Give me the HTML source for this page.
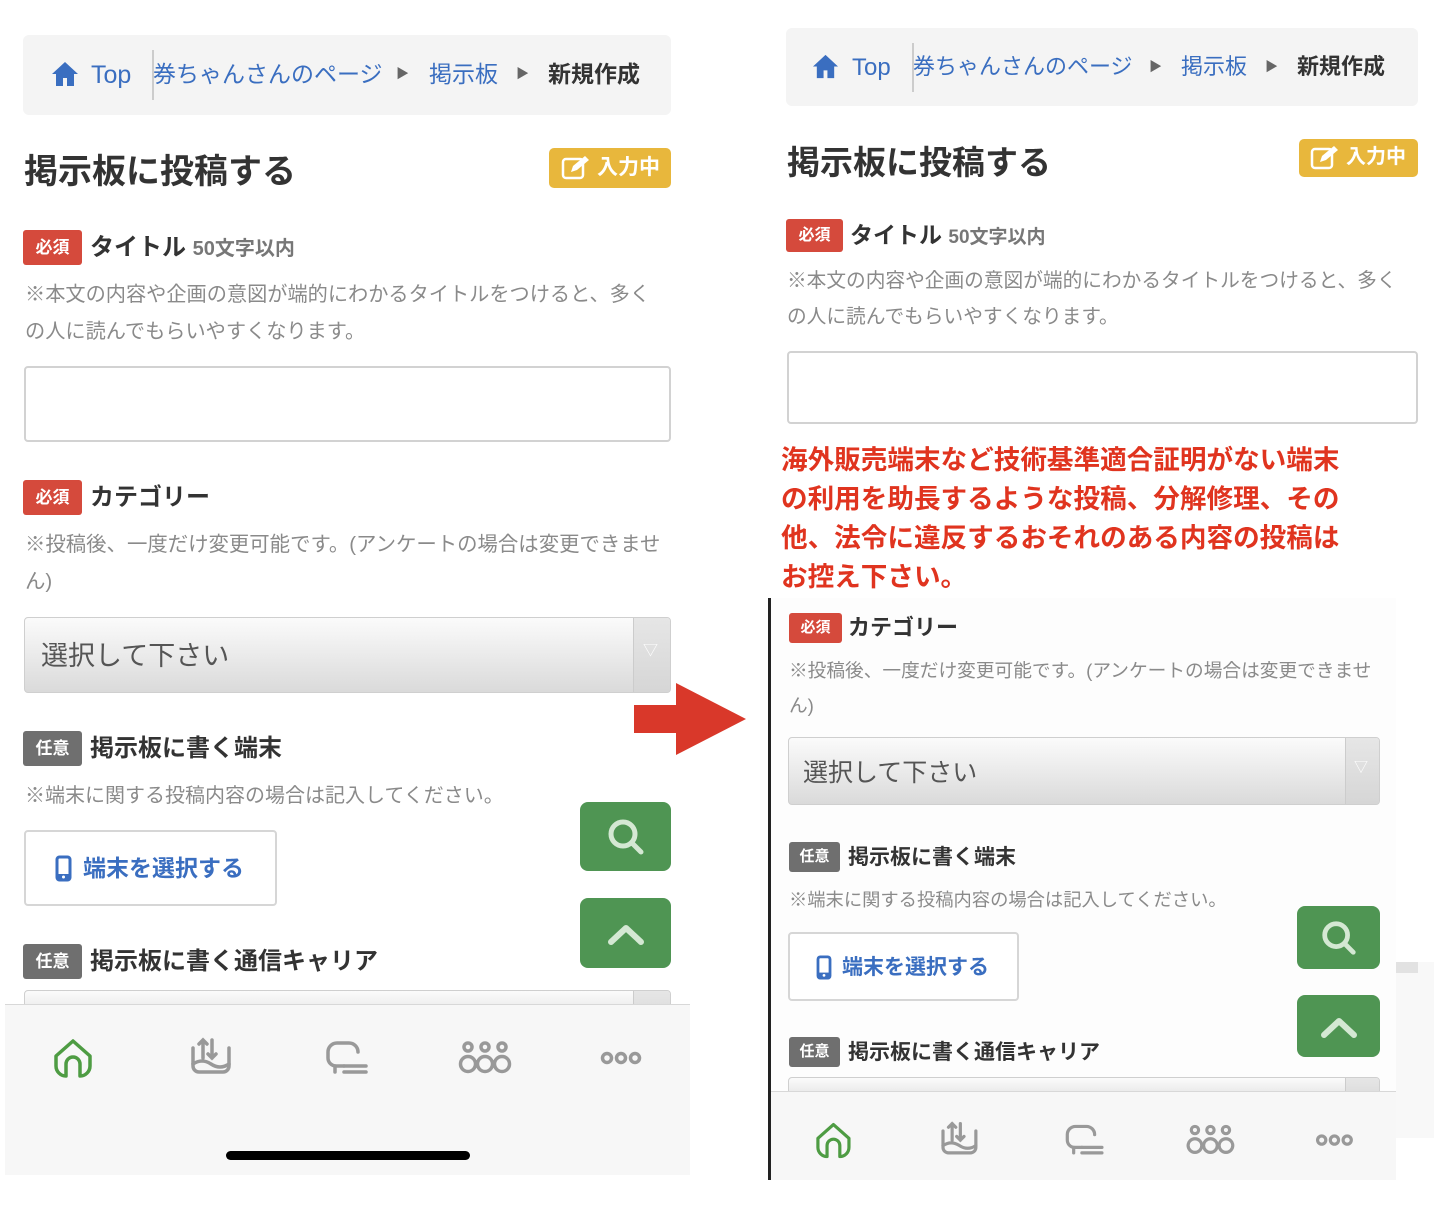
<!DOCTYPE html>
<html><head><meta charset="utf-8"><style>
*{margin:0;padding:0;box-sizing:border-box}
body{width:1434px;height:1206px;background:#fff;position:relative;overflow:hidden;font-family:"Liberation Sans","Noto Sans CJK JP",sans-serif;color:#333}
.a{position:absolute;white-space:nowrap;line-height:1}
.bc{background:#f4f4f4;border-radius:6px}
.blue{color:#3a6ec0}
.badge{position:absolute;color:#fff;border-radius:3px;text-align:center;font-weight:bold}
.req{background:#d54a3c}
.opt{background:#6f6f6f}
.h{font-weight:bold;color:#333}
.note{color:#8a8a8a}
.inp{position:absolute;border:2px solid #d2d2d2;border-radius:4px;background:#fff}
.sel{position:absolute;border:1px solid #cfcfcf;border-radius:4px;background:linear-gradient(#fbfbfb,#dadada);overflow:hidden}
.sel .r{position:absolute;right:0;top:0;bottom:0;background:linear-gradient(#e6e6e6,#d6d6d6);border-left:1px solid #ccc}
.gb{position:absolute;background:#4f9553;border-radius:8px}
.btn{position:absolute;border:2px solid #d6d6d6;border-radius:4px;background:#fff}
.nav{position:absolute;background:#f7f7f7;border-top:1px solid #d8d8d8}
</style></head><body>

<!-- LEFT -->
<div class="a bc" style="left:23px;top:35px;width:648px;height:80px"></div>
<svg class="a" style="left:51px;top:60px" width="28" height="28" viewBox="0 0 28 28"><path d="M14 2L1 14h4v12h7v-8h4v8h7V14h4z" fill="#3a6ec0"/></svg>
<div class="a blue" style="left:91px;top:63px;font-size:25px">Top</div>
<div class="a" style="left:152px;top:50px;width:2px;height:50px;background:#ccc"></div>
<div class="a blue" style="left:153px;top:63px;font-size:23px">券ちゃんさんのページ</div>
<div class="a" style="left:396px;top:67px;font-size:13px;color:#666">▶</div>
<div class="a blue" style="left:429px;top:63px;font-size:23px">掲示板</div>
<div class="a" style="left:516px;top:67px;font-size:13px;color:#666">▶</div>
<div class="a h" style="left:548px;top:63px;font-size:23px">新規作成</div>

<div class="a h" style="left:24px;top:155px;font-size:34px">掲示板に投稿する</div>
<div class="a" style="left:549px;top:148px;width:122px;height:40px;background:#e8b73c;border-radius:5px"></div>
<svg class="a" style="left:561px;top:155px" width="30" height="26" viewBox="0 0 30 26"><rect x="2" y="4" width="20" height="19" rx="3" fill="none" stroke="#fff" stroke-width="2.5"/><path d="M10 17l2-6 12-10 4 4-12 10z" fill="#fff"/></svg>
<div class="a" style="left:597px;top:157px;font-size:21px;color:#fff;font-weight:bold">入力中</div>

<div class="badge req" style="left:23px;top:230px;width:59px;height:35px;line-height:35px;font-size:17px">必須</div>
<div class="a h" style="left:90px;top:236px;font-size:24px">タイトル <span style="color:#777;font-size:20px">50文字以内</span></div>
<div class="a note" style="left:25px;top:285px;font-size:20.2px">※本文の内容や企画の意図が端的にわかるタイトルをつけると、多く</div>
<div class="a note" style="left:25px;top:322px;font-size:20.2px">の人に読んでもらいやすくなります。</div>
<div class="inp" style="left:24px;top:366px;width:647px;height:76px"></div>

<div class="badge req" style="left:23px;top:480px;width:59px;height:35px;line-height:35px;font-size:17px">必須</div>
<div class="a h" style="left:90px;top:486px;font-size:24px">カテゴリー</div>
<div class="a note" style="left:25px;top:535px;font-size:20.4px">※投稿後、一度だけ変更可能です。(アンケートの場合は変更できませ</div>
<div class="a note" style="left:25px;top:572px;font-size:20.4px">ん)</div>
<div class="sel" style="left:24px;top:617px;width:647px;height:76px"><div class="r" style="width:37px"></div><div class="a" style="left:16px;top:25px;font-size:27px;color:#555">選択して下さい</div><div class="a" style="right:12px;top:25px;font-size:15px;color:#fff">▽</div></div>

<div class="badge opt" style="left:23px;top:731px;width:59px;height:35px;line-height:35px;font-size:17px">任意</div>
<div class="a h" style="left:90px;top:737px;font-size:24px">掲示板に書く端末</div>
<div class="a note" style="left:25px;top:786px;font-size:20px">※端末に関する投稿内容の場合は記入してください。</div>
<div class="btn" style="left:24px;top:830px;width:253px;height:76px"></div>
<svg class="a" style="left:55px;top:855px" width="17" height="27" viewBox="0 0 17 27"><rect x="2" y="2" width="13" height="23" rx="2.5" fill="none" stroke="#3a6ec0" stroke-width="3"/><rect x="2" y="19" width="13" height="6" fill="#3a6ec0"/><circle cx="8.5" cy="22" r="1.5" fill="#fff"/></svg>
<div class="a blue" style="left:83px;top:857px;font-size:23px;font-weight:bold">端末を選択する</div>

<div class="gb" style="left:580px;top:802px;width:91px;height:69px"></div>
<svg class="a" style="left:605px;top:816px" width="42" height="42" viewBox="0 0 42 42"><circle cx="18" cy="18" r="12" fill="none" stroke="#d4e8d3" stroke-width="5"/><path d="M27 27l9 9" stroke="#d4e8d3" stroke-width="5" stroke-linecap="round"/></svg>
<div class="gb" style="left:580px;top:898px;width:91px;height:70px"></div>
<svg class="a" style="left:605px;top:920px" width="42" height="28" viewBox="0 0 42 28"><path d="M6 22L21 8l15 14" fill="none" stroke="#d4e8d3" stroke-width="6" stroke-linecap="round" stroke-linejoin="round"/></svg>

<div class="badge opt" style="left:23px;top:944px;width:59px;height:35px;line-height:35px;font-size:17px">任意</div>
<div class="a h" style="left:90px;top:950px;font-size:24px">掲示板に書く通信キャリア</div>
<div class="sel" style="left:24px;top:990px;width:647px;height:40px"><div class="r" style="width:37px"></div></div>

<div class="nav" style="left:5px;top:1004px;width:685px;height:171px"></div>
<svg class="a" style="left:50px;top:1036px" width="240" height="46" viewBox="0 0 240 46">
<path d="M6 20L23 5l17 15v10a10 10 0 0 1-10 10h0V28a7 7 0 0 0-14 0v12h0A10 10 0 0 1 6 30z" fill="none" stroke="#4e9c43" stroke-width="3.5" stroke-linejoin="round"/>
<g fill="none" stroke="#999" stroke-width="3.5" stroke-linecap="round"><path d="M143 12v18a6 6 0 0 0 6 6h24a6 6 0 0 0 6-6V12"/><path d="M143 28q9-6 18 0t18 0"/><path d="M153 22V4M149 8l4-4 4 4M162 4v18M158 18l4 4 4-4"/></g>
</svg>
<svg class="a" style="left:320px;top:1036px" width="340" height="46" viewBox="0 0 340 46" fill="none" stroke="#999" stroke-width="3.5" stroke-linecap="round">
<path d="M24 30h-8a8 8 0 0 1-8-8v-6a9 9 0 0 1 9-9h12a9 9 0 0 1 9 9"/><path d="M15 30v6M24 30h22M24 36h22"/>
<circle cx="148" cy="11" r="4"/><circle cx="165" cy="11" r="4"/><circle cx="182" cy="11" r="4"/><circle cx="148" cy="28" r="7.5"/><circle cx="165" cy="28" r="7.5"/><circle cx="182" cy="28" r="7.5"/>
<circle cx="287" cy="22" r="4.5"/><circle cx="301" cy="22" r="4.5"/><circle cx="315" cy="22" r="4.5"/>
</svg>
<div class="a" style="left:226px;top:1151px;width:244px;height:9px;background:#000;border-radius:5px"></div>

<!-- ARROW -->
<div class="a" style="left:634px;top:705px;width:44px;height:28px;background:#d9382a"></div>
<div class="a" style="left:676px;top:683px;width:0;height:0;border-top:36px solid transparent;border-bottom:36px solid transparent;border-left:70px solid #d9382a"></div>

<!-- RIGHT -->
<div class="a bc" style="left:786px;top:28px;width:632px;height:78px"></div>
<svg class="a" style="left:812px;top:53px" width="27" height="27" viewBox="0 0 28 28"><path d="M14 2L1 14h4v12h7v-8h4v8h7V14h4z" fill="#3a6ec0"/></svg>
<div class="a blue" style="left:852px;top:56px;font-size:24px">Top</div>
<div class="a" style="left:912px;top:43px;width:2px;height:49px;background:#ccc"></div>
<div class="a blue" style="left:913px;top:56px;font-size:22px">券ちゃんさんのページ</div>
<div class="a" style="left:1149px;top:60px;font-size:13px;color:#666">▶</div>
<div class="a blue" style="left:1181px;top:56px;font-size:22px">掲示板</div>
<div class="a" style="left:1265px;top:60px;font-size:13px;color:#666">▶</div>
<div class="a h" style="left:1297px;top:56px;font-size:22px">新規作成</div>

<div class="a h" style="left:787px;top:146px;font-size:33px">掲示板に投稿する</div>
<div class="a" style="left:1299px;top:139px;width:119px;height:38px;background:#e8b73c;border-radius:5px"></div>
<svg class="a" style="left:1310px;top:145px" width="30" height="26" viewBox="0 0 30 26"><rect x="2" y="4" width="20" height="19" rx="3" fill="none" stroke="#fff" stroke-width="2.5"/><path d="M10 17l2-6 12-10 4 4-12 10z" fill="#fff"/></svg>
<div class="a" style="left:1346px;top:147px;font-size:20px;color:#fff;font-weight:bold">入力中</div>

<div class="badge req" style="left:786px;top:219px;width:57px;height:33px;line-height:33px;font-size:16px">必須</div>
<div class="a h" style="left:850px;top:224px;font-size:23px">タイトル <span style="color:#777;font-size:19px">50文字以内</span></div>
<div class="a note" style="left:787px;top:272px;font-size:19.7px">※本文の内容や企画の意図が端的にわかるタイトルをつけると、多く</div>
<div class="a note" style="left:787px;top:308px;font-size:19.7px">の人に読んでもらいやすくなります。</div>
<div class="inp" style="left:787px;top:351px;width:631px;height:73px"></div>

<div style="position:absolute;left:781px;top:441px;font-size:26.6px;line-height:39px;color:#e0341f;font-weight:bold;width:570px">海外販売端末など技術基準適合証明がない端末の利用を助長するような投稿、分解修理、その他、法令に違反するおそれのある内容の投稿はお控え下さい。</div>

<div class="a" style="left:1396px;top:962px;width:38px;height:176px;background:#f8f8f8"></div>
<div class="a" style="left:1396px;top:962px;width:22px;height:11px;background:#e2e2e2"></div>
<div class="a" style="left:770px;top:598px;width:626px;height:582px;background:#fdfdfd"></div>
<div class="a" style="left:768px;top:598px;width:3px;height:582px;background:#222"></div>

<div class="badge req" style="left:789px;top:613px;width:53px;height:30px;line-height:30px;font-size:15px">必須</div>
<div class="a h" style="left:848px;top:617px;font-size:22px">カテゴリー</div>
<div class="a note" style="left:789px;top:662px;font-size:18.7px">※投稿後、一度だけ変更可能です。(アンケートの場合は変更できませ</div>
<div class="a note" style="left:789px;top:697px;font-size:18.7px">ん)</div>
<div class="sel" style="left:788px;top:737px;width:592px;height:68px"><div class="r" style="width:34px"></div><div class="a" style="left:14px;top:23px;font-size:25px;color:#555">選択して下さい</div><div class="a" style="right:11px;top:22px;font-size:14px;color:#fff">▽</div></div>

<div class="badge opt" style="left:789px;top:842px;width:51px;height:30px;line-height:30px;font-size:15px">任意</div>
<div class="a h" style="left:848px;top:847px;font-size:21px">掲示板に書く端末</div>
<div class="a note" style="left:789px;top:891px;font-size:18.3px">※端末に関する投稿内容の場合は記入してください。</div>
<div class="btn" style="left:788px;top:932px;width:231px;height:69px"></div>
<svg class="a" style="left:816px;top:955px" width="16" height="25" viewBox="0 0 17 27"><rect x="2" y="2" width="13" height="23" rx="2.5" fill="none" stroke="#3a6ec0" stroke-width="3"/><rect x="2" y="19" width="13" height="6" fill="#3a6ec0"/><circle cx="8.5" cy="22" r="1.5" fill="#fff"/></svg>
<div class="a blue" style="left:842px;top:957px;font-size:21px;font-weight:bold">端末を選択する</div>

<div class="gb" style="left:1297px;top:906px;width:83px;height:63px"></div>
<svg class="a" style="left:1319px;top:918px" width="40" height="40" viewBox="0 0 42 42"><circle cx="18" cy="18" r="12" fill="none" stroke="#d4e8d3" stroke-width="5"/><path d="M27 27l9 9" stroke="#d4e8d3" stroke-width="5" stroke-linecap="round"/></svg>
<div class="gb" style="left:1297px;top:995px;width:83px;height:62px"></div>
<svg class="a" style="left:1318px;top:1013px" width="42" height="28" viewBox="0 0 42 28"><path d="M6 22L21 8l15 14" fill="none" stroke="#d4e8d3" stroke-width="6" stroke-linecap="round" stroke-linejoin="round"/></svg>

<div class="badge opt" style="left:789px;top:1037px;width:51px;height:30px;line-height:30px;font-size:15px">任意</div>
<div class="a h" style="left:848px;top:1042px;font-size:21px">掲示板に書く通信キャリア</div>
<div class="sel" style="left:788px;top:1077px;width:592px;height:30px"><div class="r" style="width:34px"></div></div>

<div class="nav" style="left:771px;top:1091px;width:625px;height:89px"></div>
<svg class="a" style="left:812px;top:1120px" width="220" height="42" viewBox="0 0 240 46">
<path d="M6 20L23 5l17 15v10a10 10 0 0 1-10 10h0V28a7 7 0 0 0-14 0v12h0A10 10 0 0 1 6 30z" fill="none" stroke="#4e9c43" stroke-width="3.5" stroke-linejoin="round"/>
<g fill="none" stroke="#999" stroke-width="3.5" stroke-linecap="round"><path d="M143 12v18a6 6 0 0 0 6 6h24a6 6 0 0 0 6-6V12"/><path d="M143 28q9-6 18 0t18 0"/><path d="M153 22V4M149 8l4-4 4 4M162 4v18M158 18l4 4 4-4"/></g>
</svg>
<svg class="a" style="left:1060px;top:1120px" width="310" height="42" viewBox="0 0 340 46" fill="none" stroke="#999" stroke-width="3.5" stroke-linecap="round">
<path d="M24 30h-8a8 8 0 0 1-8-8v-6a9 9 0 0 1 9-9h12a9 9 0 0 1 9 9"/><path d="M15 30v6M24 30h22M24 36h22"/>
<circle cx="148" cy="11" r="4"/><circle cx="165" cy="11" r="4"/><circle cx="182" cy="11" r="4"/><circle cx="148" cy="28" r="7.5"/><circle cx="165" cy="28" r="7.5"/><circle cx="182" cy="28" r="7.5"/>
<circle cx="287" cy="22" r="4.5"/><circle cx="301" cy="22" r="4.5"/><circle cx="315" cy="22" r="4.5"/>
</svg>
</body></html>
